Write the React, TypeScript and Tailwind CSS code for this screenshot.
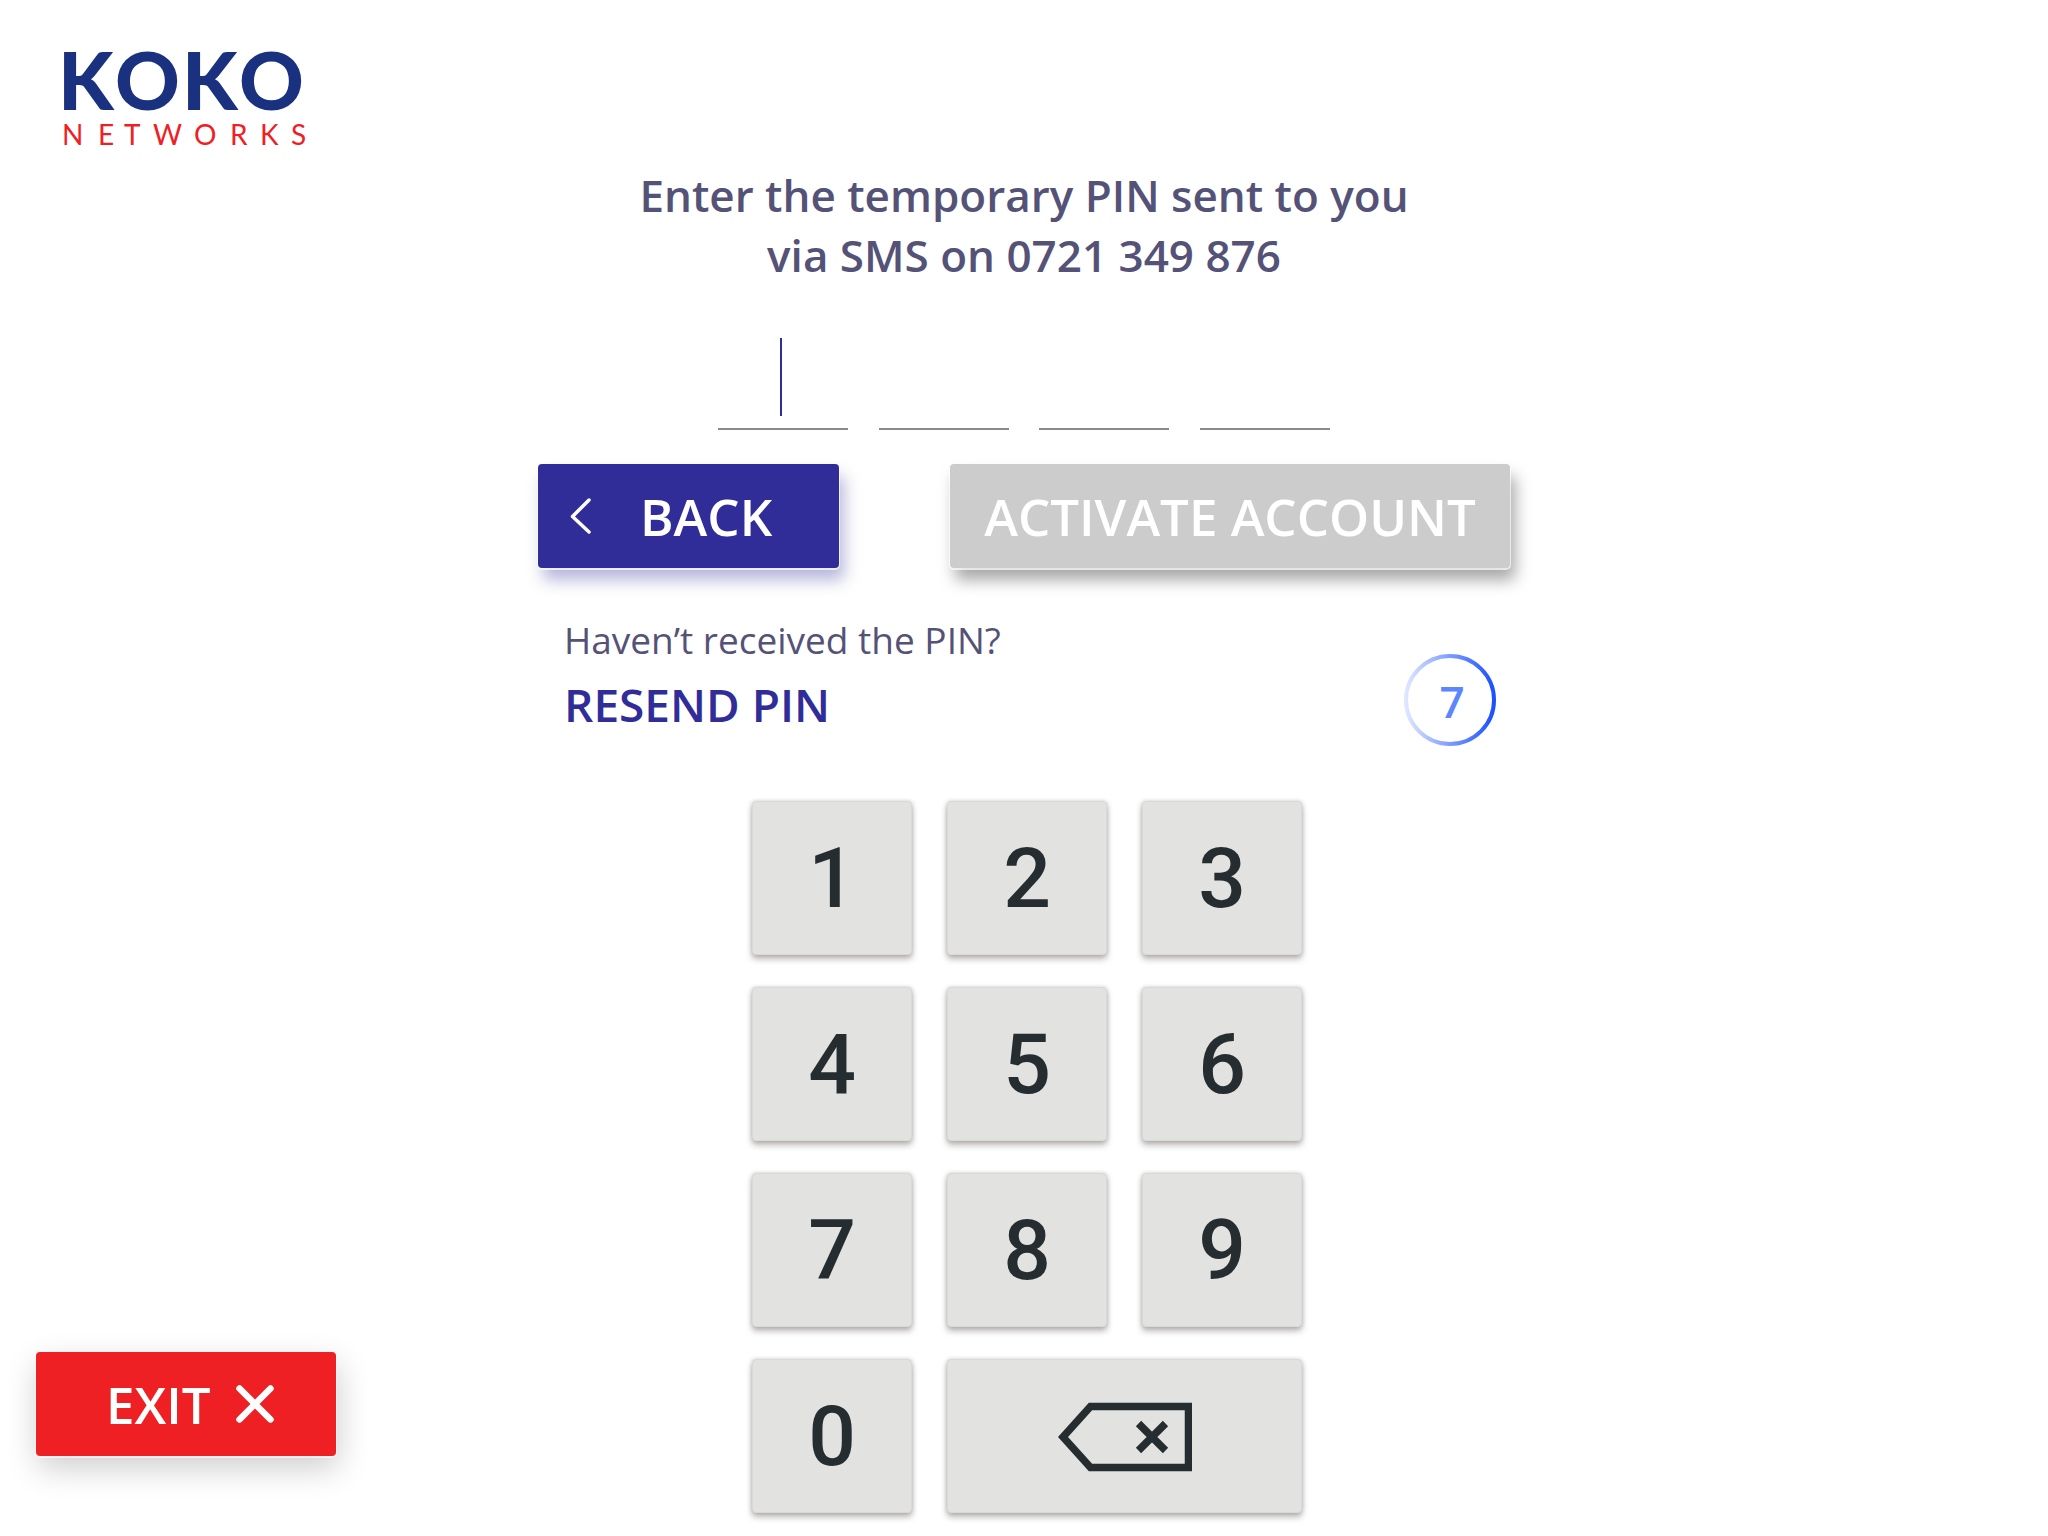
import React from "react";

const SANS = "font-['Open_Sans',sans-serif]";

function Logo() {
  return (
    <svg
      width="240"
      height="98"
      viewBox="0 0 240 98"
      className="overflow-visible font-['Lato',sans-serif]"
      role="img"
      aria-label="KOKO Networks"
    >
      <text x="-6 51 118 175" y="60" className="fill-[#1a3180] text-[80px] font-black">
        KOKO
      </text>
      <text x="-2 34 60 89 130 166 196 227" y="95" className="fill-[#ee2024] text-[28px]">
        NETWORKS
      </text>
    </svg>
  );
}

function PinInputs() {
  return (
    <div className="mx-auto mt-[51px] flex w-[612px] justify-between">
      {[1, 2, 3, 4].map((n) => (
        <div key={n} className="relative">
          <input
            type="text"
            inputMode="numeric"
            maxLength={1}
            aria-label={`PIN digit ${n}`}
            className="block h-[94px] w-[130px] border-b-2 border-[#8a8a8a] bg-transparent text-center text-[56px] text-[#312d98] outline-none"
          />
          {n === 1 && <span className="absolute top-[2px] left-[62px] h-[78px] w-[2px] bg-[#312d98]" />}
        </div>
      ))}
    </div>
  );
}

function Timer({ seconds }: { seconds: number }) {
  return (
    <div className="relative mt-[38px] flex size-[92px] items-center justify-center" role="timer">
      <svg className="absolute inset-0" viewBox="0 0 92 92" fill="none" aria-hidden="true">
        <defs>
          <linearGradient id="ring" x1="0" y1="0" x2="1" y2="0">
            <stop offset="0" stopColor="#dfe7ff" />
            <stop offset="1" stopColor="#1a50ff" />
          </linearGradient>
        </defs>
        <circle cx="46" cy="46" r="44" stroke="url(#ring)" strokeWidth="4" />
      </svg>
      <span className="pt-0.5 pl-1 text-[44px] leading-[60px] font-semibold text-[#5c85ff]">{seconds}</span>
    </div>
  );
}

const KEY =
  "flex h-[154px] items-center justify-center rounded-[4px] border border-[#d9d9d8] bg-[#e2e2e0] pt-0.5 font-['Roboto',sans-serif] text-[84px] leading-none font-medium text-[#262d30] shadow-[0_4px_6px_rgba(60,50,45,0.35),0_0_4px_rgba(60,50,45,0.2)]";

function Keypad() {
  return (
    <div className="mt-[55px] ml-[214px] grid w-[550px] grid-cols-3 gap-x-[35px] gap-y-8">
      {["1", "2", "3", "4", "5", "6", "7", "8", "9", "0"].map((d) => (
        <button key={d} type="button" className={KEY}>
          {d}
        </button>
      ))}
      <button type="button" aria-label="Delete" className={`${KEY} col-span-2`}>
        <svg width="134" height="70" viewBox="0 0 134 70" fill="none" stroke="#262d30" aria-hidden="true">
          <path d="M5 35 32.500 4.500H130.500V65.500H32.500Z" strokeWidth="7.500" />
          <path d="M80.500 21.500 107.500 48.500M107.500 21.500 80.500 48.500" strokeWidth="7.500" />
        </svg>
      </button>
    </div>
  );
}

export default function App() {
  return (
    <div className={`${SANS} grid min-h-screen grid-cols-[1fr_auto_1fr] bg-white`}>
      <aside className="flex flex-col items-start justify-between pt-[50px] pb-20 pl-9">
        <div className="pl-7">
          <Logo />
        </div>
        <button
          type="button"
          className="flex h-[104px] w-[300px] items-center gap-[25px] rounded-[4px] bg-[#ee2024] pl-[70px] text-[51px] font-semibold text-white shadow-[0_1px_0_1px_rgba(255,255,255,0.6),2px_12px_32px_rgba(0,0,0,0.2)]"
        >
          EXIT
          <svg width="38" height="38" viewBox="0 0 38 38" fill="none" aria-hidden="true">
            <path d="M3.500 3.500 34.500 34.500M34.500 3.500 3.500 34.500" stroke="#fff" strokeWidth="6.500" strokeLinecap="round" />
          </svg>
        </button>
      </aside>

      <main className="w-[972px] pt-[165px] pb-[23px]">
        <h1 className="text-center text-[44px] leading-[60px] font-semibold text-[#555277]">
          Enter the temporary PIN sent to you
          <br />
          via SMS on 0721 349 876
        </h1>

        <PinInputs />

        <div className="mt-[34px] flex justify-between text-[51px] font-semibold text-white">
          <button
            type="button"
            className="flex h-[104px] w-[301px] items-center gap-[49px] rounded-[4px] bg-[#312d98] pl-8 shadow-[0_1px_0_1px_rgba(255,255,255,0.7),5px_12px_16px_rgba(49,45,152,0.35)]"
          >
            <svg width="21" height="36" viewBox="0 0 21 36" fill="none" aria-hidden="true">
              <path d="M19 2 2.500 18.500 19 34" stroke="#fff" strokeWidth="3.500" strokeLinecap="round" strokeLinejoin="round" />
            </svg>
            BACK
          </button>
          <button
            type="button"
            disabled
            className="h-[104px] w-[560px] rounded-[4px] bg-[#cccccc] whitespace-nowrap shadow-[0_1px_0_1px_rgba(255,255,255,0.7),5px_12px_16px_rgba(0,0,0,0.35)]"
          >
            ACTIVATE ACCOUNT
          </button>
        </div>

        <div className="mt-12 flex items-start justify-between pr-[14px] pl-[26px]">
          <div>
            <p className="text-[37px] leading-[48px] text-[#555277]">Haven’t received the PIN?</p>
            <button type="button" className="mt-2 block text-[46px] leading-[64px] font-semibold text-[#312d98]">
              RESEND PIN
            </button>
          </div>
          <Timer seconds={7} />
        </div>

        <Keypad />
      </main>
    </div>
  );
}
